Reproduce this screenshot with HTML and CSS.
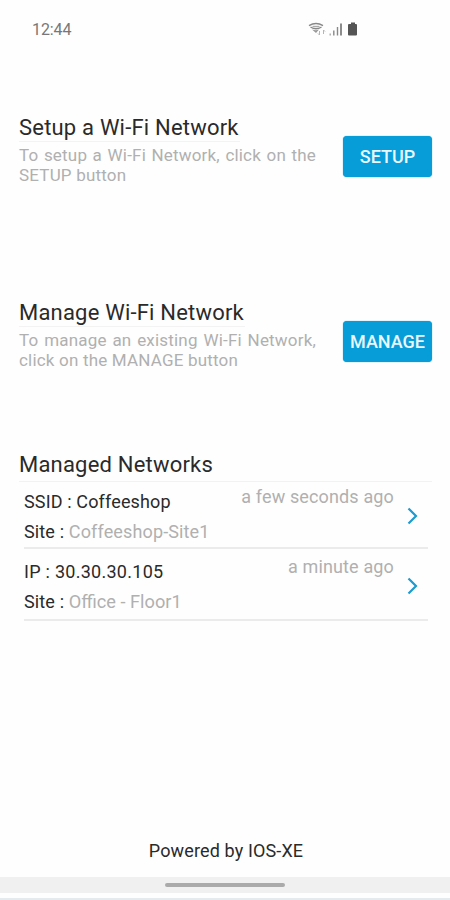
FILE: index.html
```html
<!DOCTYPE html>
<html lang="en">
<head>
<meta charset="utf-8">
<title>Wi-Fi Setup</title>
<link rel="stylesheet" href="styles.css">
</head>
<body>
<div class="screen">
  <header class="status">
    <span class="clock">12:44</span>
    <svg class="status-icons" width="52" height="18" viewBox="0 0 52 18">
      <g fill="none" stroke="#888" stroke-width="1.4">
        <path d="M1 4.700Q8 .3 15 4.700"/>
        <path d="M2.500 6Q8 9.500 13.500 6"/>
        <path d="M4.500 5.500h7" stroke="#aaa"/>
      </g>
      <path d="M4 8.500Q8 10 11 8.500L8 12z" fill="#999"/>
      <path d="M11.500 10v4M10 12.500l1.500 1.500M15.500 13V9M15.500 9l1.500 1.500" fill="none" stroke="#b5b5b5"/>
      <path d="M22.200 12.500v2" stroke="#aaa" stroke-width="1.400"/>
      <path d="M25.800 9.500v5M29.500 6v8.500" stroke="#888" stroke-width="1.400"/>
      <path d="M33 2.500v12" stroke="#666" stroke-width="1.500"/>
      <path d="M43 1.500h4V3h1q1 0 1 1v9.500q0 1-1 1h-7q-1 0-1-1V4q0-1 1-1h2z" fill="#555"/>
    </svg>
  </header>

  <section class="action setup">
    <div class="copy">
      <h2 class="title">Setup a Wi-Fi Network</h2>
      <p class="desc"><span class="line full">To setup a Wi-Fi Network, click on the</span> <span class="line">SETUP button</span></p>
    </div>
    <button class="btn">SETUP</button>
  </section>

  <section class="action manage">
    <div class="copy">
      <h2 class="title">Manage Wi-Fi Network</h2>
      <p class="desc"><span class="line full">To manage an existing Wi-Fi Network,</span> <span class="line">click on the MANAGE button</span></p>
    </div>
    <button class="btn">MANAGE</button>
  </section>

  <section class="networks">
    <h2 class="title">Managed Networks</h2>
    <ul class="list">
      <li class="row">
        <div class="info"><div class="name">SSID : Coffeeshop</div><div class="site">Site : <span class="muted">Coffeeshop-Site1</span></div></div>
        <time class="ago">a few seconds ago</time>
        <svg class="chevron" width="11" height="18" viewBox="0 0 11 18"><path d="M1.500 1.500L9 9l-7.500 7.500"/></svg>
      </li>
      <li class="row second">
        <div class="info"><div class="name ip">IP : 30.30.30.105</div><div class="site">Site : <span class="muted office">Office - Floor1</span></div></div>
        <time class="ago">a minute ago</time>
        <svg class="chevron" width="11" height="18" viewBox="0 0 11 18"><path d="M1.500 1.500L9 9l-7.500 7.500"/></svg>
      </li>
    </ul>
  </section>

  <footer class="powered">Powered by IOS-XE</footer>
  <div class="navbar"><div class="handle"></div></div>
</div>
</body>
</html>
```
FILE: styles.css
```css
* { box-sizing: border-box; }
body { margin: 0; background: #fefefe; font-family: Roboto, sans-serif; color: #2a2a2a; }
h2, p, ul { margin: 0; padding: 0; font-weight: 400; }
.screen { width: 450px; height: 900px; display: flex; flex-direction: column; overflow: hidden; }
.status { height: 114px; padding: 20px 90px 0 32px; display: flex; justify-content: space-between; align-items: flex-start; }
.clock { font-size: 16px; line-height: 19px; color: #777; letter-spacing: -.1px; }
.action { display: flex; height: 185px; padding-left: 19px; }
.action.manage { height: 152px; }
.copy { width: 297px; margin-right: 27px; }
.title { font-size: 22px; line-height: 27px; color: #2a2a2a; letter-spacing: .2px; white-space: nowrap; }
.copy .title { width: 221px; height: 28px; border-bottom: 1px solid #f3f3f3; }
.manage .title { width: 226px; }
.desc { padding-top: 3px; font-size: 17px; line-height: 20px; color: #b0b0b0; letter-spacing: .19px; }
.line { display: block; white-space: nowrap; }
.line.full { text-align-last: justify; }
.btn { width: 89px; height: 41px; margin-top: 22px; padding: 0 0 1px; border: 0; border-radius: 4px; background: #079dd9; color: #e9f7fd; font: 500 18px/21px Roboto, sans-serif; box-shadow: 0 0 1px #079dd9; }
.status-icons { margin-top: 1px; }
.networks { padding: 0 18px 0 19px; height: 387px; }
.networks .title { height: 31px; border-bottom: 1px solid #f2f2f2; }
.list { list-style: none; margin: 0 4px 0 5px; }
.row { display: flex; height: 67px; border-bottom: 2px solid #ebebeb; font-size: 18px; letter-spacing: .14px; }
.row.second { height: 72px; padding-top: 3px; }
.info { flex: 1; padding-top: 5px; line-height: 30px; white-space: nowrap; }
.ip { letter-spacing: .27px; }
.muted, .ago { color: #b0b0b0; }
.office { font-size: 18.2px; letter-spacing: 0; }
.ago { line-height: 21px; padding-top: 4px; margin-right: 13px; }
.chevron { margin: 25px 10px 0 0; }
.chevron path { fill: none; stroke: #1c9bd0; stroke-width: 2.2; }
.powered { height: 39px; padding-left: 2px; text-align: center; font-size: 18px; line-height: 26px; letter-spacing: .13px; }
.navbar { height: 23px; padding-top: 6px; background: linear-gradient(#f0f0f0 0 16px, #fefefe 16px 21px, #e4eaee 21px); }
.handle { width: 120px; height: 4px; margin: 0 auto; border-radius: 2px; background: #aaa; }
```
